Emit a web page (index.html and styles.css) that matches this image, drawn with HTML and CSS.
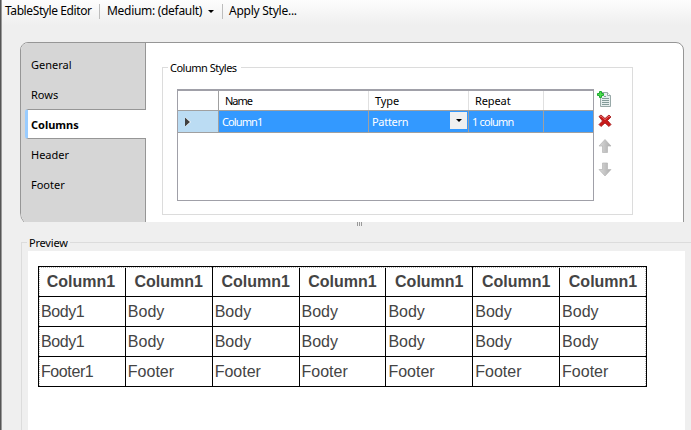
FILE: index.html
```
<!DOCTYPE html>
<html lang="en">
<head>
<meta charset="utf-8">
<title>TableStyle Editor</title>
<link rel="stylesheet" href="styles.css">
</head>
<body>
<div class="window">
  <header class="toolbar">
    <span class="tool title">TableStyle Editor</span>
    <span class="tool medium">Medium: (default)<i class="caret"></i></span>
    <span class="tool apply">Apply Style...</span>
  </header>
  <main class="upper">
    <div class="panel">
      <nav class="tabs">
        <div class="tab general">General</div>
        <div class="tab rows">Rows</div>
        <div class="tab active">Columns</div>
        <div class="tab header">Header</div>
        <div class="tab footer">Footer</div>
      </nav>
      <section class="group">
        <span class="legend styles-legend">Column Styles</span>
        <div class="grid">
          <div class="grid-row grid-head">
            <span></span><span class="h-name">Name</span><span class="h-type">Type</span><span class="h-repeat">Repeat</span><span></span>
          </div>
          <div class="grid-row grid-selected">
            <span class="marker"><svg width="6" height="10" viewBox="0 0 6 10"><path d="M0 0L6 5L0 10Z" fill="#fff"/><path d="M0 .5L5 5L0 9.5Z" fill="#404040"/></svg></span>
            <span class="c-name">Column1</span><span class="c-type">Pattern<b class="drop"><i class="caret"></i></b></span><span class="c-repeat">1 column</span><span></span>
          </div>
        </div>
        <div class="actions">
          <svg width="16" height="17" viewBox="0 0 16 17">
            <path d="M3.5 1.5H10.5L13.5 4.5V15.5H3.5Z" fill="#e6eeee" stroke="#98a9a8"/>
            <path d="M10.5 1.5V4.5H13.5" fill="#fff" stroke="#98a9a8"/>
            <path d="M7 5.5H9M5 7.5H12M5 9.5H12M5 11.5H12M5 13.5H12" stroke="#839b99"/>
            <path d="M2.5 .5H4.5V2.5H6.5V4.5H4.5V6.5H2.5V4.5H.5V2.5H2.5Z" fill="#4be04b" stroke="#21a832"/>
          </svg>
          <svg width="16" height="17" viewBox="0 0 16 17">
            <path d="M2 4.5L4 3L8 6.5L12 3L14 5L10.5 8.5L14 12.5L12 14.5L8 11L4 14.5L2 12.5L5.5 9Z" fill="#c91a1a" stroke="#a01818" stroke-width=".8"/>
            <path d="M3 4.7L4 4L8 7.7L12 4L13 5" fill="none" stroke="#e46464"/>
          </svg>
          <svg class="up" width="16" height="17" viewBox="0 0 16 17">
            <defs><linearGradient id="g"><stop stop-color="#dadada"/><stop offset="1" stop-color="#adadad"/></linearGradient></defs>
            <path d="M8 1.5L14 8H10.5V14.5H5.5V8H2Z" fill="url(#g)" stroke="#b4b4b4" stroke-width=".7"/>
          </svg>
          <svg class="down" width="16" height="17" viewBox="0 0 16 17">
            <path d="M8 15L14 8.5H10.5V2H5.5V8.5H2Z" fill="url(#g)" stroke="#b4b4b4" stroke-width=".7"/>
          </svg>
        </div>
      </section>
    </div>
  </main>
  <div class="splitter"><i></i><i></i><i></i></div>
  <section class="preview">
    <span class="legend preview-legend">Preview</span>
    <div class="sheet">
      <div class="table-frame">
      <table>
        <thead><tr><th>Column1</th><th>Column1</th><th>Column1</th><th>Column1</th><th>Column1</th><th>Column1</th><th>Column1</th></tr></thead>
        <tbody>
          <tr><td>Body1</td><td>Body</td><td>Body</td><td>Body</td><td>Body</td><td>Body</td><td>Body</td></tr>
          <tr><td>Body1</td><td>Body</td><td>Body</td><td>Body</td><td>Body</td><td>Body</td><td>Body</td></tr>
          <tr><td>Footer1</td><td>Footer</td><td>Footer</td><td>Footer</td><td>Footer</td><td>Footer</td><td>Footer</td></tr>
        </tbody>
      </table>
      </div>
    </div>
  </section>
</div>
</body>
</html>
```
FILE: styles.css
```
* { box-sizing: border-box; }
body { margin: 0; font: 12px/16px "Noto Sans", sans-serif; color: #000; }
.window {
  width: 691px; height: 430px; overflow: hidden;
  display: flex; flex-direction: column;
  border-left: 1px solid #555;
  box-shadow: inset 1px 0 #999;
  background: #efefef linear-gradient(#fdfdfd, #efefef) 0 0 / 100% 25px no-repeat;
}
.toolbar { display: flex; height: 42px; flex: none; padding: 3px 0 0 4px; white-space: nowrap; }
.tool { height: 16px; letter-spacing: -0.4px; }
.title { width: 94px; }
.medium { width: 123px; padding-left: 8px; letter-spacing: -0.3px; }
.apply { padding-left: 7px; letter-spacing: -0.25px; }
.medium, .apply { position: relative; }
.medium::before, .apply::before {
  content: ""; position: absolute; left: 0; top: 1px; width: 1px; height: 15px; background: #bdbdbd;
}
.caret {
  display: inline-block; width: 0; height: 0;
  border: 3px solid transparent; border-top-color: #000; border-bottom: 0;
}
.medium .caret { margin-left: 6px; vertical-align: 2px; }

.upper { height: 180px; flex: none; overflow: hidden; padding-left: 19px; font-size: 11px; }
.panel {
  width: 664px; height: 185px; display: flex;
  border: 1px solid #969696; border-radius: 8px 8px 0 14px;
  background: #fff; overflow: hidden;
}
.tabs {
  width: 125px; flex: none; padding-top: 6px; background: #d6d6d6;
  background-image: linear-gradient(#969696, #969696);
  background-size: 1px 100%; background-position: right; background-repeat: no-repeat;
}
.tab { height: 30px; padding: 8px 0 0 10px; }
.active {
  margin-left: 4px; padding: 7px 0 0 3px; font-weight: 700;
  background: #fff; border: solid #969696; border-width: 1px 0;
  border-left: 3px solid #99ccff; border-radius: 3px 0 0 3px;
}
.group {
  width: 471px; height: 148px; margin: 24px 0 0 16px; padding: 21px 0 0 14px;
  display: flex; align-items: flex-start; position: relative; border: 1px solid #dcdcdc;
}
.legend { position: absolute; padding: 0 2px; white-space: nowrap; }
.styles-legend { left: 5px; top: -8px; background: #fff; letter-spacing: -0.5px; padding-right: 4px; }
.grid { width: 417px; height: 112px; border: 1px solid #a0a0a8; border-top-width: 2px; }
.grid-row { display: grid; grid-template-columns: 41px 150px 100px 75px 49px; }
.grid-head { height: 20px; border-bottom: 1px solid #a0a0a0; }
.grid-head span { border-right: 1px solid #e0e0e0; padding: 2px 0 0 6px; letter-spacing: -0.1px; }
.grid-head .h-name { letter-spacing: -1px; }
.grid-head span:first-child { border-color: #a0a0a0; }
.grid-selected { height: 22px; color: #fff; background: #3399ff; border-bottom: 1px solid #a0a0a0; }
.grid-selected span { padding: 3px 0 0 3px; border-right: 1px solid #a0a0a0; letter-spacing: -0.9px; }
.grid-row span:last-child { border-right: 0; }
.grid-selected .marker { background: #bbdcf3; padding: 6px 0 0 7px; line-height: 0; }
.grid-selected .c-type { display: flex; justify-content: space-between; padding-right: 1px; letter-spacing: -0.3px; }
.grid-selected .c-repeat { letter-spacing: -0.8px; }
.drop { width: 17px; height: 17px; margin-top: -2px; background: #f0f0f0; display: flex; align-items: center; justify-content: center; }
.actions { display: flex; flex-direction: column; margin: 2px 0 0 3px; gap: 4px; }
.up { margin-top: 5px; }
.down { margin-top: 2px; }

.splitter { height: 20px; flex: none; display: flex; gap: 1px; padding-left: 356px; }
.splitter i { width: 1px; height: 4px; background: #999; }
.preview {
  position: relative; width: 671px; height: 188px; flex: none; margin-left: 20px; padding: 8px 0 0 6px;
  border: solid #dcdcdc; border-width: 1px 0 0 1px;
}
.preview-legend { left: 5px; top: -8px; background: #efefef; font-size: 11px; letter-spacing: -0.2px; }
.sheet { width: 657px; height: 179px; padding: 15px 0 0 10px; background: #fff; }
.table-frame { position: relative; width: 609px; }
.table-frame::after {
  content: ""; position: absolute; inset: 1px;
  border: 1px dotted #bbb; border-bottom: 0;
}
table {
  width: 609px; border-collapse: collapse; table-layout: fixed;
  font: 16px/18px "Liberation Sans", Arial, sans-serif; color: #444;
}
th, td { height: 30px; padding: 0 0 0 2px; border: 1px solid #000; text-align: left; }
th { padding: 0; text-align: center; }
th:first-child { padding-right: 2px; }
td:first-child { letter-spacing: -0.4px; }
```
